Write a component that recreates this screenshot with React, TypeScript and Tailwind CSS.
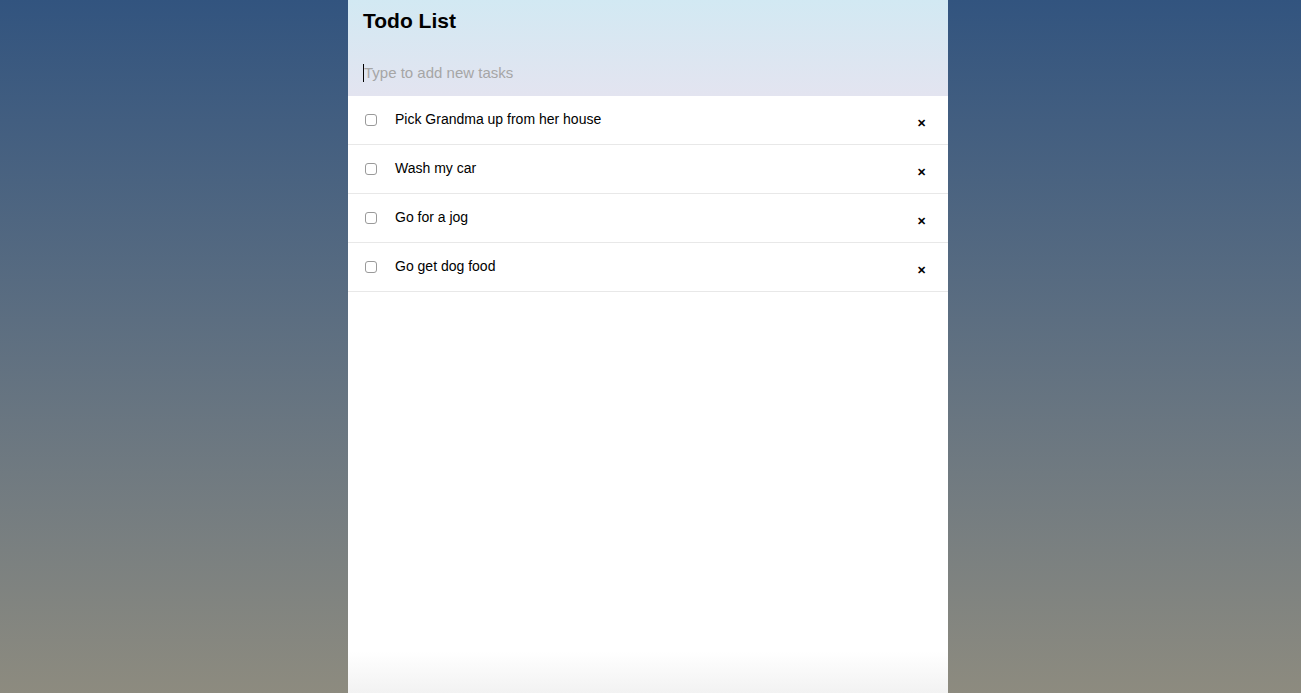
import React from "react";

const tasks = [
  "Pick Grandma up from her house",
  "Wash my car",
  "Go for a jog",
  "Go get dog food",
];

export default function App() {
  return (
    <div
      className="w-full h-[693px] flex justify-center pr-[5px] bg-gradient-to-b from-[#32547f] to-[#8d8b7f] overflow-hidden"
      style={{ fontFamily: '"Liberation Sans", Arial, sans-serif' }}
    >
      <div className="w-[600px] h-full flex flex-col bg-gradient-to-b from-white from-[94%] to-[#f2f2f2]">
        <div className="h-[96px] bg-gradient-to-b from-[#d2e9f3] to-[#e3e4f0] px-[15px] pt-[8px] flex flex-col">
          <h1 className="text-[21px] font-bold text-black leading-[26px]">Todo List</h1>
          <div className="mt-[28px] flex items-center h-[22px]">
            <span className="w-px h-[18px] bg-black" />
            <span className="text-[15px] text-[#a6a6a6] leading-[18px]">Type to add new tasks</span>
          </div>
        </div>
        {tasks.map((t) => (
          <div key={t} className="h-[49px] border-b border-[#e8e8e8] flex items-center pl-[17px] pr-[22px]">
            <span className="w-[12px] h-[12px] rounded-[3px] border border-[#9a9a9a] bg-white -mt-[1px]" />
            <span className="ml-[18px] text-[14px] text-black leading-[17px] -mt-[2px]">{t}</span>
            <span className="ml-auto text-[11px] font-bold text-black mt-[6px]">✕</span>
          </div>
        ))}
      </div>
    </div>
  );
}
